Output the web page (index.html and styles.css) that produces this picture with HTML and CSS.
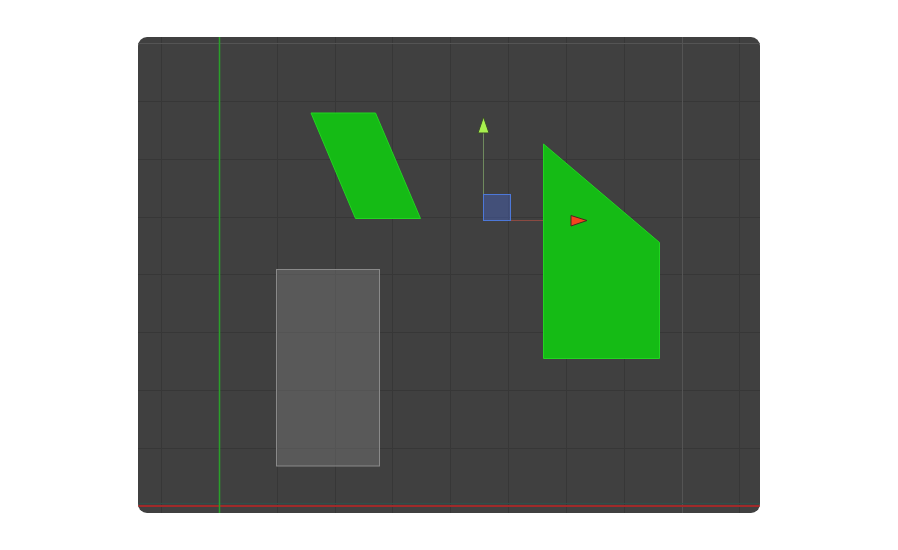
FILE: index.html
```html
<!DOCTYPE html>
<html lang="en">
<head>
    <meta charset="UTF-8">
    <title>Scene View</title>
    <link rel="stylesheet" href="styles.css">
</head>
<body>
    <div class="viewport">
        <svg class="scene" width="622" height="476" viewBox="0 0 622 476">
            <!-- grid -->
            <g class="grid">
                <line x1="23.5" y1="0" x2="23.5" y2="476"/>
                <line x1="139.5" y1="0" x2="139.5" y2="476"/>
                <line x1="197.5" y1="0" x2="197.5" y2="476"/>
                <line x1="254.5" y1="0" x2="254.5" y2="476"/>
                <line x1="312.5" y1="0" x2="312.5" y2="476"/>
                <line x1="370.5" y1="0" x2="370.5" y2="476"/>
                <line x1="428.5" y1="0" x2="428.5" y2="476"/>
                <line x1="486.5" y1="0" x2="486.5" y2="476"/>
                <line x1="601.5" y1="0" x2="601.5" y2="476"/>
                <line x1="0" y1="64.5" x2="622" y2="64.5"/>
                <line x1="0" y1="122.5" x2="622" y2="122.5"/>
                <line x1="0" y1="180.5" x2="622" y2="180.5"/>
                <line x1="0" y1="237.5" x2="622" y2="237.5"/>
                <line x1="0" y1="295.5" x2="622" y2="295.5"/>
                <line x1="0" y1="353.5" x2="622" y2="353.5"/>
                <line x1="0" y1="411.5" x2="622" y2="411.5"/>
            </g>
            <line class="grid-major" x1="0" y1="6.5" x2="622" y2="6.5"/>
            <line class="grid-major" x1="544.5" y1="0" x2="544.5" y2="476"/>
            <line class="axis-x-shadow" x1="0" y1="466.5" x2="622" y2="466.5"/>
            <line class="axis-x" x1="0" y1="469" x2="622" y2="469"/>
            <line class="axis-y" x1="81.5" y1="0" x2="81.5" y2="476"/>

            <!-- gizmo lines sit under the shapes -->
            <line class="gizmo-y-line" x1="345.5" y1="184" x2="345.5" y2="96"/>
            <line class="gizmo-x-line" x1="345" y1="183.5" x2="434" y2="183.5"/>

            <!-- shapes -->
            <polygon class="shape" points="173,76 237.5,76 282.5,181.5 217.5,181.5"/>
            <polygon class="shape" points="405.5,107 521.5,205.5 521.5,321.5 405.5,321.5"/>
            <rect class="ghost" x="138.5" y="232.5" width="103" height="196.5"/>

            <!-- gizmo handles -->
            <rect class="gizmo-plane" x="345.5" y="157.5" width="27" height="26"/>
            <polygon class="gizmo-y-head" points="345.5,80 340,96 351,96"/>
            <polygon class="gizmo-x-head" points="449,183.5 433,178.5 433,189"/>
        </svg>
    </div>
</body>
</html>
```

FILE: styles.css
```css
body {
    background: #ffffff;
    margin: 0;
    height: 550px;
    display: flex;
    align-items: center;
    justify-content: center;
    font-family: 'Liberation Sans', sans-serif;
}

.viewport {
    width: 622px;
    height: 476px;
    background: #404040;
    border-radius: 9px;
    overflow: hidden;
}

.scene {
    display: block;
}

.grid line {
    stroke: #373737;
    stroke-width: 1;
}

.grid-major {
    stroke: #545454;
    stroke-width: 1;
}

.axis-x {
    stroke: #a02a2a;
    stroke-width: 2;
}

.axis-x-shadow {
    stroke: #2f4f4a;
    stroke-width: 1;
}

.axis-y {
    stroke: #2aa02a;
    stroke-width: 1.5;
}

.shape {
    fill: #15bb15;
    stroke: #22d422;
    stroke-width: 1;
}

.ghost {
    fill: rgba(110, 110, 110, 0.55);
    stroke: #8a8a8a;
    stroke-width: 1;
}

.gizmo-y-line {
    stroke: #6f8a5e;
    stroke-width: 1;
}

.gizmo-x-line {
    stroke: #8a4a42;
    stroke-width: 1;
}

.gizmo-plane {
    fill: rgba(70, 100, 190, 0.45);
    stroke: #4d78d8;
    stroke-width: 1;
}

.gizmo-y-head {
    fill: #a8f04e;
    stroke: #3a4a2a;
    stroke-width: 1;
}

.gizmo-x-head {
    fill: #f5421e;
    stroke: #4a2a20;
    stroke-width: 1;
}
```
